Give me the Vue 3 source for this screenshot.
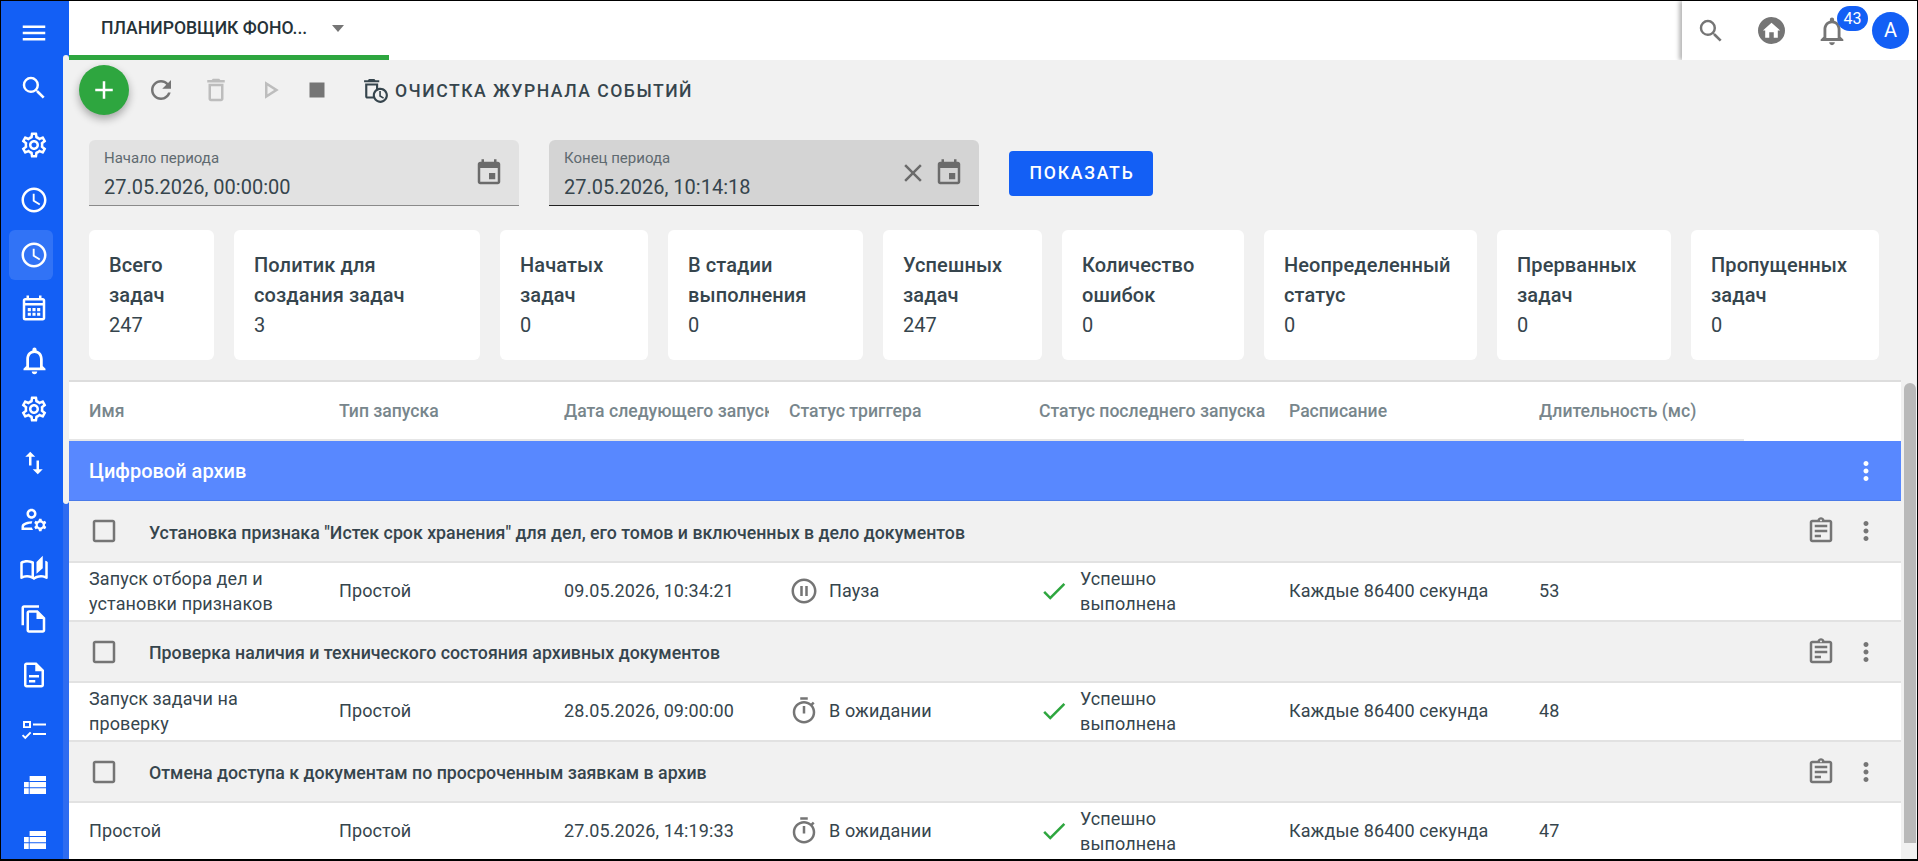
<template>
  <div class="page">
    <aside class="sidebar">
      <div class="side-scroll">
        <div
          v-for="(item, i) in sideItems"
          :key="i"
          class="side-item"
          :class="{ active: item.active, big: item.big }"
          :style="{ marginTop: item.gap + 'px' }"
        >
          <span class="side-hover" v-if="item.active"></span>
          <svg class="side-icon" viewBox="0 0 24 24"><path :d="item.d" /></svg>
        </div>
      </div>
      <div class="side-thumb"></div>
    </aside>

    <div class="main">
      <header class="topbar">
        <div class="tab">
          <span class="tab-title">ПЛАНИРОВЩИК ФОНО...</span>
          <span class="tab-caret"></span>
        </div>
        <div class="top-actions">
          <svg class="top-search" viewBox="0 0 24 24"><path :d="icons.search" /></svg>
          <svg class="top-home" viewBox="0 0 24 24">
            <circle cx="12" cy="12" r="12" />
            <path class="home-white" d="M10 18.500v-5h4v5h3.600v-6.600h2L12 5 4.400 11.900h2v6.600z" />
          </svg>
          <div class="bell-wrap">
            <svg class="top-bell" viewBox="0 0 24 24"><path :d="icons.bell" /></svg>
            <span class="badge">43</span>
          </div>
          <span class="avatar">A</span>
        </div>
      </header>

      <div class="content">
        <div class="toolbar">
          <button class="fab">
            <svg viewBox="0 0 24 24"><path d="M19 13h-6v6h-2v-6H5v-2h6V5h2v6h6v2z" /></svg>
          </button>
          <svg class="tool tool-refresh" viewBox="0 0 24 24"><path :d="icons.refresh" /></svg>
          <svg class="tool tool-off tool-trash" viewBox="0 0 24 24"><path :d="icons.trash" /></svg>
          <svg class="tool tool-off tool-play" viewBox="0 0 24 24"><path :d="icons.play" /></svg>
          <svg class="tool tool-stop" viewBox="0 0 24 24"><path d="M6 6h12v12H6z" /></svg>
          <div class="clean">
            <svg viewBox="0 0 24 24"><path :d="icons.autoDelete" /></svg>
            <span>ОЧИСТКА ЖУРНАЛА СОБЫТИЙ</span>
          </div>
        </div>

        <div class="filters">
          <div class="field">
            <div class="field-text">
              <label>Начало периода</label>
              <div class="field-value">27.05.2026, 00:00:00</div>
            </div>
            <svg class="field-icon" viewBox="0 0 24 24"><path :d="icons.event" /></svg>
          </div>
          <div class="field focused">
            <div class="field-text">
              <label>Конец периода</label>
              <div class="field-value">27.05.2026, 10:14:18</div>
            </div>
            <svg class="field-icon" viewBox="0 0 24 24"><path :d="icons.close" /></svg>
            <svg class="field-icon" viewBox="0 0 24 24"><path :d="icons.event" /></svg>
          </div>
          <button class="show-btn">ПОКАЗАТЬ</button>
        </div>

        <div class="stats">
          <div v-for="card in stats" :key="card.title" class="stat">
            <div class="stat-title">{{ card.title }}</div>
            <div class="stat-value">{{ card.value }}</div>
          </div>
        </div>

        <div class="table-wrap">
          <div class="table">
            <div class="thead">
              <div v-for="h in headers" :key="h" class="th">{{ h }}</div>
            </div>
            <div class="group">
              <span>Цифровой архив</span>
              <svg viewBox="0 0 24 24"><path :d="icons.more" /></svg>
            </div>
            <template v-for="row in rows" :key="row.group">
              <div class="subgroup">
                <svg class="check" viewBox="0 0 24 24"><path :d="icons.checkbox" /></svg>
                <span class="sub-title">{{ row.group }}</span>
                <svg class="sub-clip" viewBox="0 0 24 24"><path :d="icons.clipboard" /></svg>
                <svg class="sub-more" viewBox="0 0 24 24"><path :d="icons.more" /></svg>
              </div>
              <div class="tr">
                <div class="td td-name">{{ row.name }}</div>
                <div class="td">Простой</div>
                <div class="td">{{ row.next }}</div>
                <div class="td status">
                  <svg viewBox="0 0 24 24"><path :d="row.paused ? icons.pause : icons.timer" /></svg>
                  <span>{{ row.paused ? 'Пауза' : 'В ожидании' }}</span>
                </div>
                <div class="td result">
                  <svg viewBox="0 0 24 24"><path :d="icons.check" /></svg>
                  <span>Успешно выполнена</span>
                </div>
                <div class="td">Каждые 86400 секунда</div>
                <div class="td">{{ row.ms }}</div>
              </div>
            </template>
          </div>
          <div class="scrollbar"><div class="scroll-thumb"></div></div>
        </div>
      </div>
    </div>
  </div>
</template>

<script setup>
const icons = {
  search: 'M15.500 14h-.79l-.28-.27A6.471 6.471 0 0 0 16 9.500 6.500 6.500 0 1 0 9.500 16c1.610 0 3.090-.59 4.230-1.570l.27.28v.79l5 4.990L20.490 19l-4.990-5zm-6 0C7.010 14 5 11.990 5 9.500S7.010 5 9.500 5 14 7.010 14 9.500 11.990 14 9.500 14z',
  bell: 'M12 22c1.100 0 2-.9 2-2h-4c0 1.100.9 2 2 2zm6-6v-5c0-3.070-1.630-5.640-4.500-6.320V4c0-.83-.67-1.500-1.500-1.500s-1.500.67-1.500 1.500v.68C7.640 5.360 6 7.920 6 11v5l-2 2v1h16v-1l-2-2zm-2 1H8v-6c0-2.480 1.510-4.500 4-4.500s4 2.020 4 4.500v6z',
  refresh: 'M17.650 6.350C16.200 4.900 14.210 4 12 4c-4.420 0-7.990 3.580-7.990 8s3.570 8 7.990 8c3.730 0 6.840-2.550 7.730-6h-2.080c-.82 2.330-3.040 4-5.650 4-3.310 0-6-2.690-6-6s2.690-6 6-6c1.660 0 3.140.69 4.220 1.780L13 11h7V4l-2.350 2.350z',
  trash: 'M16 9v10H8V9h8m-1.500-6h-5l-1 1H5v2h14V4h-3.500l-1-1zM18 7H6v12c0 1.100.9 2 2 2h8c1.100 0 2-.9 2-2V7z',
  play: 'M10 8.640L15.270 12 10 15.360V8.640M8 5v14l11-7L8 5z',
  autoDelete: 'M15 2h-3.500l-1-1h-5l-1 1H1v2h14zM16 9c-.7 0-1.370.1-2 .29V5H2v12c0 1.100.9 2 2 2h5.680c1.120 2.360 3.530 4 6.320 4 3.870 0 7-3.130 7-7s-3.130-7-7-7zm-7 7c0 .34.03.67.08 1H4V7h8v3.260c-1.810 1.270-3 3.360-3 5.740zm7 5c-2.760 0-5-2.240-5-5s2.240-5 5-5 5 2.240 5 5-2.240 5-5 5zM16.500 12H15v5l3.600 2.100.8-1.200-2.900-1.700z',
  event: 'M17 12h-5v5h5v-5zM16 1v2H8V1H6v2H5c-1.110 0-1.990.9-1.990 2L3 19c0 1.100.89 2 2 2h14c1.100 0 2-.9 2-2V5c0-1.100-.9-2-2-2h-1V1h-2zm3 18H5V8h14v11z',
  close: 'M19 6.410 17.590 5 12 10.590 6.410 5 5 6.410 10.590 12 5 17.590 6.410 19 12 13.410 17.590 19 19 17.590 13.410 12z',
  more: 'M12 8c1.100 0 2-.9 2-2s-.9-2-2-2-2 .9-2 2 .9 2 2 2zm0 2c-1.100 0-2 .9-2 2s.9 2 2 2 2-.9 2-2-.9-2-2-2zm0 6c-1.100 0-2 .9-2 2s.9 2 2 2 2-.9 2-2-.9-2-2-2z',
  checkbox: 'M19 5v14H5V5h14m0-2H5c-1.100 0-2 .9-2 2v14c0 1.100.9 2 2 2h14c1.100 0 2-.9 2-2V5c0-1.100-.9-2-2-2z',
  clipboard: 'M7 15h5v2H7zm0-4h10v2H7zm0-4h10v2H7zm12-4h-4.180C14.400 1.840 13.300 1 12 1c-1.300 0-2.400.84-2.820 2H5c-1.100 0-2 .9-2 2v14c0 1.100.9 2 2 2h14c1.100 0 2-.9 2-2V5c0-1.100-.9-2-2-2zm-7-.25c.41 0 .75.34.75.75s-.34.75-.75.75-.75-.34-.75-.75.34-.75.75-.75zM19 19H5V5h14v14z',
  pause: 'M9 16h2V8H9v8zm3-14C6.480 2 2 6.480 2 12s4.480 10 10 10 10-4.480 10-10S17.520 2 12 2zm0 18c-4.410 0-8-3.590-8-8s3.590-8 8-8 8 3.590 8 8-3.590 8-8 8zm1-4h2V8h-2v8z',
  timer: 'M15 1H9v2h6V1zm-4 13h2V8h-2v6zm8.030-6.610l1.420-1.420c-.43-.51-.9-.99-1.410-1.410l-1.420 1.420C16.070 4.740 14.120 4 12 4c-4.970 0-9 4.030-9 9s4.020 9 9 9 9-4.030 9-9c0-2.120-.74-4.070-1.970-5.610zM12 20c-3.870 0-7-3.130-7-7s3.130-7 7-7 7 3.130 7 7-3.130 7-7 7z',
  check: 'M9 16.170 4.830 12l-1.420 1.410L9 19 21 7l-1.410-1.410z'
}

const gear = 'M19.430 12.980c.04-.32.07-.64.07-.98 0-.34-.03-.66-.07-.98l2.110-1.650c.19-.15.24-.42.12-.64l-2-3.460c-.09-.16-.26-.25-.44-.25-.06 0-.12.01-.17.03l-2.490 1c-.52-.4-1.080-.73-1.690-.98l-.38-2.650C14.460 2.180 14.250 2 14 2h-4c-.25 0-.46.18-.49.42l-.38 2.650c-.61.25-1.170.59-1.690.98l-2.490-1c-.06-.02-.12-.03-.18-.03-.17 0-.34.09-.43.25l-2 3.460c-.13.22-.07.49.12.64l2.110 1.650c-.04.32-.07.65-.07.98 0 .33.03.66.07.98l-2.110 1.650c-.19.15-.24.42-.12.64l2 3.460c.09.16.26.25.44.25.06 0 .12-.01.17-.03l2.490-1c.52.4 1.080.73 1.690.98l.38 2.650c.03.24.24.42.49.42h4c.25 0 .46-.18.49-.42l.38-2.650c.61-.25 1.170-.59 1.690-.98l2.490 1c.06.02.12.03.18.03.17 0 .34-.09.43-.25l2-3.460c.12-.22.07-.49-.12-.64l-2.110-1.650zm-1.980-1.710c.04.31.05.52.05.73 0 .21-.02.43-.05.73l-.14 1.130.89.7 1.080.84-.7 1.210-1.270-.51-1.040-.42-.9.68c-.43.32-.84.56-1.250.73l-1.060.43-.16 1.130-.2 1.350h-1.400l-.19-1.350-.16-1.130-1.060-.43c-.43-.18-.83-.41-1.230-.71l-.91-.7-1.060.43-1.270.51-.7-1.210 1.080-.84.89-.7-.14-1.130c-.03-.31-.05-.54-.05-.74s.02-.43.05-.73l.14-1.130-.89-.7-1.080-.84.7-1.210 1.270.51 1.040.42.9-.68c.43-.32.84-.56 1.250-.73l1.060-.43.16-1.130.2-1.350h1.390l.19 1.350.16 1.130 1.060.43c.43.18.83.41 1.230.71l.91.7 1.060-.43 1.270-.51.7 1.210-1.070.85-.89.7.14 1.130zM12 8c-2.210 0-4 1.790-4 4s1.790 4 4 4 4-1.790 4-4-1.790-4-4-4zm0 6c-1.100 0-2-.9-2-2s.9-2 2-2 2 .9 2 2-.9 2-2 2z'
const clock = 'M11.990 2C6.470 2 2 6.480 2 12s4.470 10 9.990 10C17.520 22 22 17.520 22 12S17.520 2 11.990 2zM12 20c-4.420 0-8-3.580-8-8s3.580-8 8-8 8 3.580 8 8-3.580 8-8 8zm.5-13H11v6l5.250 3.150.75-1.230-4.500-2.670z'
const tableRows = 'M8.500 4.800H21.600V8.800H8.500zM4 9.500H7.800V13.800H4zM8.500 9.500H21.600V13.800H8.500zM4 14.500H7.800V19.200H4zM8.500 14.500H21.600V19.200H8.500z'

const sideItems = [
  { gap: 10, d: 'M3 18h18v-2H3v2zm0-5h18v-2H3v2zm0-7v2h18V6H3z' },
  { gap: 11, d: icons.search },
  { gap: 13, d: gear },
  { gap: 11, d: clock },
  { gap: 11, d: clock, active: true },
  { gap: 9, d: 'M19 4h-1V2h-2v2H8V2H6v2H5c-1.110 0-1.990.9-1.990 2L3 20a2 2 0 0 0 2 2h14c1.100 0 2-.9 2-2V6c0-1.100-.9-2-2-2zm0 16H5V10h14v10zm0-12H5V6h14v2zM7 12h2.500v2.500H7zm3.750 0h2.500v2.500h-2.500zm3.750 0H17v2.500h-2.500zM7 15.700h2.500v2.500H7zm3.750 0h2.500v2.500h-2.500zm3.750 0H17v2.500h-2.500z' },
  { gap: 8, d: icons.bell, big: true },
  { gap: 5, d: gear },
  { gap: 10, d: 'M16 17.010V10h-2v7.010h-3L15 21l4-3.990h-3zM9 3L5 6.990h3V14h2V6.990h3L9 3z' },
  { gap: 13, d: 'M4 18v-.65c0-.34.16-.66.41-.81C6.100 15.530 8.030 15 10 15c.03 0 .05 0 .08.01.1-.7.3-1.370.59-1.980-.22-.02-.44-.03-.67-.03-2.420 0-4.680.67-6.610 1.820-.88.52-1.390 1.500-1.390 2.530V20h9.260c-.42-.6-.75-1.280-.97-2H4zm6-7c2.210 0 4-1.790 4-4s-1.790-4-4-4-4 1.790-4 4 1.790 4 4 4zm0-6c1.100 0 2 .9 2 2s-.9 2-2 2-2-.9-2-2 .9-2 2-2zM20.750 16c0-.22-.03-.42-.06-.63l1.140-1.010-1-1.730-1.450.49c-.32-.27-.68-.48-1.080-.63L18 11h-2l-.3 1.490c-.4.15-.76.36-1.080.63l-1.450-.49-1 1.730 1.140 1.010c-.03.21-.06.41-.06.63s.03.42.06.63l-1.140 1.010 1 1.730 1.450-.49c.32.27.68.48 1.080.63L16 21h2l.3-1.490c.4-.15.76-.36 1.080-.63l1.450.49 1-1.730-1.140-1.010c.03-.21.06-.41.06-.63zM17 18c-1.100 0-2-.9-2-2s.9-2 2-2 2 .9 2 2-.9 2-2 2z' },
  { gap: 6, d: 'M22.470 5.200C22 4.960 21.510 4.760 21 4.590v12.030C19.860 16.210 18.690 16 17.500 16c-1.900 0-3.780.54-5.500 1.580V5.480C10.380 4.550 8.510 4 6.500 4 4.710 4 3.020 4.440 1.530 5.200c-.33.16-.53.51-.53.88v12.080c0 .76.81 1.230 1.480.87C3.690 18.400 5.050 18 6.500 18c2.070 0 3.980.82 5.500 2 1.520-1.180 3.430-2 5.500-2 1.450 0 2.810.4 4.020 1.040.67.36 1.480-.11 1.480-.87V6.080c0-.37-.2-.72-.53-.88zM10 16.620C8.860 16.210 7.690 16 6.500 16c-1.190 0-2.360.21-3.500.62V6.710C4.110 6.240 5.280 6 6.500 6c1.200 0 2.390.25 3.500.72v9.900zM19 .5l-5 5V15l5-4.500V.5z' },
  { gap: 5, d: 'M16 1H4c-1.100 0-2 .9-2 2v14h2V3h12V1zm-1 4H8c-1.100 0-1.990.9-1.990 2L6 21c0 1.100.89 2 1.990 2H19c1.100 0 2-.9 2-2V11l-6-6zM8 21V7h6v5h5v9H8z' },
  { gap: 12, d: 'M8 16h5v2H8zm0-4h8v2H8zm6-10H6c-1.100 0-2 .9-2 2v16c0 1.100.89 2 1.990 2H18c1.100 0 2-.9 2-2V8l-6-6zm4 18H6V4h7v5h5v11z' },
  { gap: 11, d: 'M3.200 4.800h6.400v5.600H3.200zm1.600 1.500v2.600h3.200V6.300zM11.200 6.800h10.400v1.600H11.200zM11.200 14.400h10.400V16H11.200zM5 19.300 2.300 16.600l1.100-1.100 1.600 1.600 3.800-3.800 1.100 1.100z' },
  { gap: 11, d: tableRows },
  { gap: 11, d: tableRows }
]

const stats = [
  { title: 'Всего задач', value: 247 },
  { title: 'Политик для создания задач', value: 3 },
  { title: 'Начатых задач', value: 0 },
  { title: 'В стадии выполнения', value: 0 },
  { title: 'Успешных задач', value: 247 },
  { title: 'Количество ошибок', value: 0 },
  { title: 'Неопределенный статус', value: 0 },
  { title: 'Прерванных задач', value: 0 },
  { title: 'Пропущенных задач', value: 0 }
]

const headers = ['Имя', 'Тип запуска', 'Дата следующего запуска', 'Статус триггера', 'Статус последнего запуска', 'Расписание', 'Длительность (мс)']

const rows = [
  {
    group: 'Установка признака "Истек срок хранения" для дел, его томов и включенных в дело документов',
    name: 'Запуск отбора дел и установки признаков',
    next: '09.05.2026, 10:34:21',
    paused: true,
    ms: 53
  },
  {
    group: 'Проверка наличия и технического состояния архивных документов',
    name: 'Запуск задачи на проверку',
    next: '28.05.2026, 09:00:00',
    ms: 48
  },
  {
    group: 'Отмена доступа к документам по просроченным заявкам в архив',
    name: 'Простой',
    next: '27.05.2026, 14:19:33',
    ms: 47
  }
]
</script>

<style>
html, body {
  margin: 0;
  overflow: hidden;
}
</style>

<style scoped>
* {
  box-sizing: border-box;
}

.page {
  display: flex;
  width: 1918px;
  height: 861px;
  border: solid #000;
  border-width: 1px 1px 2px 1px;
  background: #f1f1f1;
  font-family: Roboto, sans-serif;
  color: #36454d;
  overflow: hidden;
}

.sidebar {
  position: relative;
  flex: none;
  width: 68px;
  background: #135ff5;
}

.side-scroll {
  display: flex;
  flex-direction: column;
  width: 62px;
  height: 100%;
  overflow: hidden;
}

.side-item {
  position: relative;
  flex: none;
  display: flex;
  align-items: center;
  justify-content: center;
  width: 66px;
  height: 44px;
}

.side-hover {
  position: absolute;
  left: 8px;
  top: -3px;
  width: 44px;
  height: 50px;
  border-radius: 6px;
  background: rgba(255, 255, 255, 0.13);
}

.side-icon {
  position: relative;
  flex: none;
  width: 30px;
  height: 30px;
  fill: #fff;
}

.side-item.big .side-icon {
  width: 33px;
  height: 33px;
}

.side-thumb {
  position: absolute;
  top: 54px;
  right: 0;
  width: 6px;
  height: 449px;
  border-radius: 3px;
  background: #f1f1f1;
}

.sidebar::after {
  content: "";
  position: absolute;
  top: 503px;
  right: 0;
  bottom: 0;
  width: 6px;
  background: #2f6cf0;
}

.main {
  flex: 1;
  min-width: 0;
  display: flex;
  flex-direction: column;
}

.topbar {
  flex: none;
  display: flex;
  justify-content: space-between;
  height: 59px;
  background: #fff;
}

.tab {
  display: flex;
  align-items: center;
  gap: 25px;
  width: 320px;
  padding-left: 32px;
  border-bottom: 5px solid #2ea63f;
}

.tab-title {
  font-size: 17.600px;
  font-weight: 500;
  color: #263238;
}

.tab-caret {
  width: 0;
  height: 0;
  border: 6.500px solid transparent;
  border-top: 7px solid #757575;
  border-bottom: 0;
}

.top-actions {
  display: flex;
  align-items: center;
  width: 235px;
  padding-left: 14px;
  box-shadow: -3px 0 4px rgba(0, 0, 0, 0.28);
  clip-path: inset(0 0 0 -8px);
}

.top-search {
  flex: none;
  width: 30px;
  height: 30px;
  fill: #757575;
}

.top-home {
  flex: none;
  width: 27px;
  height: 27px;
  margin-left: 32px;
  fill: #757575;
}

.home-white {
  fill: #fff;
}

.bell-wrap {
  position: relative;
  flex: none;
  display: flex;
  margin-left: 30px;
}

.top-bell {
  width: 34px;
  height: 34px;
  fill: #757575;
}

.badge {
  position: absolute;
  left: 22px;
  top: -8px;
  width: 31px;
  height: 25px;
  border-radius: 13px;
  background: #135ff5;
  color: #fff;
  font-size: 16px;
  line-height: 25px;
  text-align: center;
}

.avatar {
  flex: none;
  width: 37px;
  height: 37px;
  margin-left: 23px;
  border-radius: 50%;
  background: #135ff5;
  color: #fff;
  font-size: 20px;
  line-height: 37px;
  text-align: center;
}

.content {
  flex: 1;
  min-height: 0;
  display: flex;
  flex-direction: column;
}

.toolbar {
  flex: none;
  display: flex;
  align-items: center;
  height: 60px;
  padding-left: 10px;
}

.fab {
  flex: none;
  display: flex;
  align-items: center;
  justify-content: center;
  width: 50px;
  height: 50px;
  padding: 0;
  border: 0;
  border-radius: 50%;
  background: #2ea63f;
  box-shadow: 0 4px 9px rgba(0, 0, 0, 0.32);
}

.fab svg {
  width: 30px;
  height: 30px;
  fill: #fff;
}

.tool {
  flex: none;
  width: 30px;
  height: 30px;
  fill: #757575;
}

.tool-refresh {
  margin-left: 17px;
}

.tool-trash {
  margin-left: 25px;
}

.tool-play {
  margin-left: 24px;
}

.tool-stop {
  margin-left: 17px;
}

.tool-off {
  fill: #bdbdbd;
}

.clean {
  display: flex;
  align-items: center;
  gap: 6px;
  margin: 2px 0 0 31px;
  font-size: 17.600px;
  font-weight: 500;
  letter-spacing: 1.500px;
  color: #36454d;
}

.clean svg {
  width: 26px;
  height: 26px;
  fill: #36454d;
}

.filters {
  flex: none;
  display: flex;
  align-items: center;
  gap: 30px;
  height: 66px;
  margin-top: 20px;
  padding-left: 20px;
}

.field {
  display: flex;
  align-items: center;
  gap: 6px;
  width: 430px;
  height: 66px;
  padding: 0 15px;
  border-bottom: 1px solid #8a8a8a;
  border-radius: 6px 6px 0 0;
  background: #e2e2e2;
}

.field.focused {
  border-bottom-color: #222;
  background: #d4d4d4;
}

.field-text {
  flex: 1;
  min-width: 0;
  padding-top: 2px;
}

.field-text label {
  display: block;
  font-size: 15px;
  line-height: 18px;
  color: #5f6a70;
}

.field-value {
  margin-top: 8px;
  font-size: 20px;
  line-height: 24px;
  color: #36454d;
}

.field-icon {
  flex: none;
  width: 30px;
  height: 30px;
  fill: #6b6b6b;
}

.show-btn {
  width: 144px;
  height: 45px;
  padding: 0 0 0 2px;
  border: 0;
  border-radius: 4px;
  background: #135ff5;
  color: #fff;
  font-family: inherit;
  font-size: 17.600px;
  font-weight: 500;
  letter-spacing: 1.760px;
}

.stats {
  flex: none;
  display: grid;
  grid-template-columns: 125px 246px 148px 195px 159px 182px 213px 174px 188px;
  gap: 20px;
  height: 130px;
  margin-top: 24px;
  padding-left: 20px;
}

.stat {
  padding: 20px;
  border-radius: 6px;
  background: #fff;
}

.stat-title {
  font-size: 20px;
  font-weight: 500;
  line-height: 30px;
  letter-spacing: 0.100px;
  color: #36454d;
}

.stat-value {
  font-size: 20px;
  line-height: 30px;
  color: #36454d;
}

.table-wrap {
  flex: 1;
  min-height: 0;
  display: flex;
  margin-top: 20px;
  overflow: hidden;
}

.table {
  flex: none;
  width: 1832px;
  border-top: 2px solid #ddd;
  background: #fff;
}

.thead,
.tr {
  display: grid;
  grid-template-columns: 250px 225px 225px 250px 250px 250px 205px;
}

.thead {
  width: 1675px;
  height: 59px;
  border-bottom: 2px solid #e6e6e6;
}

.th {
  overflow: hidden;
  padding-left: 20px;
  font-size: 17.600px;
  font-weight: 500;
  line-height: 58px;
  color: #78868c;
  white-space: nowrap;
}

.group {
  display: flex;
  align-items: center;
  justify-content: space-between;
  height: 60px;
  padding: 0 20px;
  border-bottom: 1px solid #4a7ae8;
  background: #5888ff;
  color: #fff;
  font-size: 20px;
  font-weight: 500;
}

.group svg {
  width: 30px;
  height: 30px;
  fill: #fff;
}

.subgroup {
  display: flex;
  align-items: center;
  height: 61px;
  padding: 0 20px;
  border-bottom: 2px solid #e2e2e2;
  background: #f1f1f1;
}

.group + .subgroup {
  height: 62px;
}

.check {
  flex: none;
  width: 30px;
  height: 30px;
  fill: #757575;
}

.sub-title {
  flex: 1;
  margin: 3px 0 0 30px;
  font-size: 17.770px;
  font-weight: 500;
  color: #36454d;
}

.sub-clip {
  flex: none;
  width: 30px;
  height: 30px;
  fill: #757575;
}

.sub-more {
  flex: none;
  width: 30px;
  height: 30px;
  margin-left: 15px;
  fill: #757575;
}

.tr {
  height: 59px;
  align-items: center;
  padding-bottom: 2px;
  border-bottom: 2px solid #e2e2e2;
  background: #fff;
}

.td {
  padding-left: 20px;
  font-size: 18px;
  line-height: 25px;
  letter-spacing: 0.100px;
  color: #36454d;
}

.td-name {
  padding-right: 15px;
}

.status,
.result {
  display: flex;
  align-items: center;
}

.status svg {
  flex: none;
  width: 30px;
  height: 30px;
  margin-right: 10px;
  fill: #757575;
}

.result svg {
  flex: none;
  width: 30px;
  height: 30px;
  margin-right: 11px;
  fill: #2ea63f;
}

.result span {
  width: 120px;
}

.scrollbar {
  flex: 1;
  padding: 3px 2px 0 3px;
  background: #f1f1f1;
}

.scroll-thumb {
  width: 12px;
  height: 460px;
  border-radius: 6px 6px 0 0;
  background: #b9b9b9;
}
</style>
